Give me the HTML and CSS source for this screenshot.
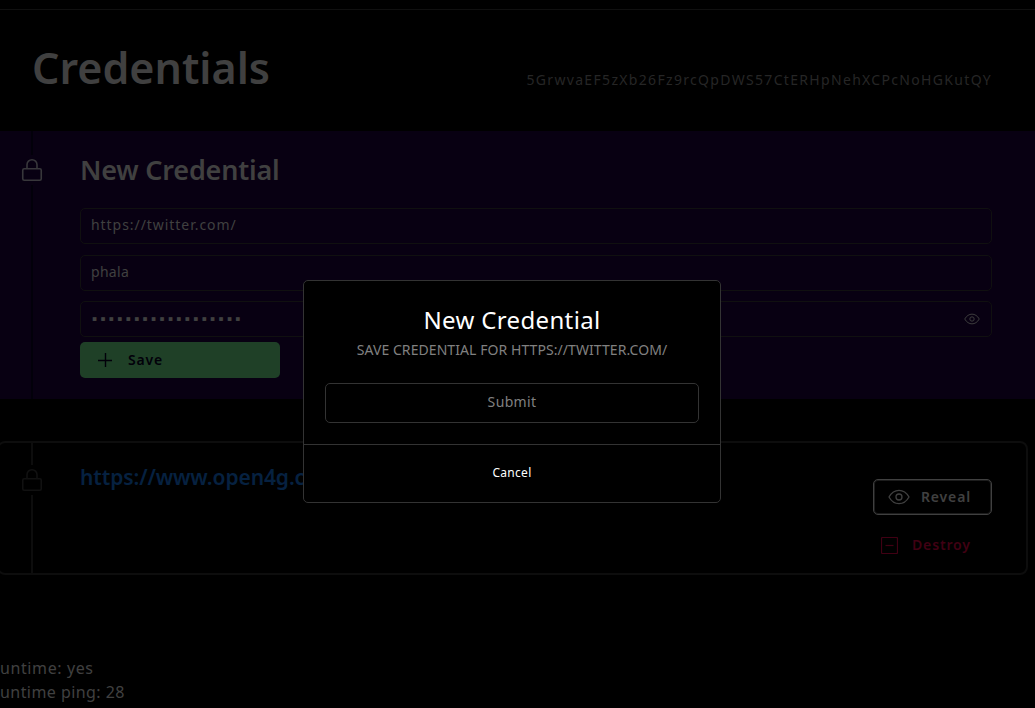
FILE: index.html
```
<!DOCTYPE html>
<html lang="en">
<head>
<meta charset="utf-8">
<title>Credentials</title>
<link rel="stylesheet" href="styles.css">
</head>
<body>
<header class="header">
  <h1 class="title"><span>Credentials</span></h1>
  <div class="address"><span>5GrwvaEF5zXb26Fz9rcQpDWS57CtERHpNehXCPcNoHGKutQY</span></div>
</header>
<section class="create">
  <div class="rail">
    <i class="rail-top"></i>
    <svg class="lock" viewBox="0 0 30 30"><rect x="5.75" y="13.75" width="18.5" height="11.5" rx="1.5"/><path d="M10 13.5V9.7a5 5 0 0 1 10 0v3.8"/></svg>
    <i class="rail-bottom"></i>
  </div>
  <form class="form">
    <h2 class="form-title"><span>New Credential</span></h2>
    <div class="field"><span class="url">https://twitter.com/</span></div>
    <div class="field"><span class="user">phala</span></div>
    <div class="field"><span class="dots">▪▪▪▪▪▪▪▪▪▪▪▪▪▪▪▪▪▪</span>
      <svg class="eye-small" viewBox="0 0 22 16"><path d="M1 8C6-.9 16-.9 21 8 16 16.9 6 16.9 1 8Z"/><circle cx="11" cy="8" r="3"/></svg>
    </div>
    <button class="save" type="button">
      <svg class="plus" viewBox="0 0 14 14"><path d="M7.5 0v14M0 7.5h14"/></svg>
      <span>Save</span>
    </button>
  </form>
</section>
<section class="card">
  <div class="rail">
    <i class="rail-top"></i>
    <svg class="lock" viewBox="0 0 30 30"><rect x="5.75" y="13.75" width="18.5" height="11.5" rx="1.5"/><path d="M10 13.5V9.7a5 5 0 0 1 10 0v3.8"/></svg>
    <i class="rail-bottom"></i>
  </div>
  <h3 class="link"><span>https://www.open4g.com</span></h3>
  <div class="actions">
    <button class="reveal" type="button">
      <svg class="eye" viewBox="0 0 22 16"><path d="M1 8C6-.9 16-.9 21 8 16 16.9 6 16.9 1 8Z"/><circle cx="11" cy="8" r="3"/></svg>
      <span>Reveal</span>
    </button>
    <button class="destroy" type="button">
      <svg class="minus" viewBox="0 0 17 17"><rect x=".5" y=".5" width="16" height="16" rx="1"/><path d="M4.5 8.5h8"/></svg>
      <span>Destroy</span>
    </button>
  </div>
</section>
<footer class="status">
  <div><span class="runtime">untime: yes</span></div>
  <div><span class="ping">untime ping: 28</span></div>
</footer>
<div class="modal">
  <div class="modal-body">
    <h4 class="modal-title"><span>New Credential</span></h4>
    <p class="modal-sub"><span>SAVE CREDENTIAL FOR HTTPS://TWITTER.COM/</span></p>
    <button class="submit" type="button"><span>Submit</span></button>
  </div>
  <button class="cancel" type="button"><span>Cancel</span></button>
</div>
</body>
</html>
```
FILE: styles.css
```
* { box-sizing: border-box; }
body {
  margin: 0;
  padding-top: 9px;
  height: 708px;
  overflow: hidden;
  background: #000;
  color: #404040;
  font-family: "Noto Sans", "Open Sans", sans-serif;
}
h1, h2, h3, h4, p { margin: 0; white-space: nowrap; }
button { font: inherit; margin: 0; padding: 0; border: 0; background: none; color: inherit; }
svg { display: block; fill: none; stroke: currentColor; flex: none; }
.header {
  height: 122px;
  border-top: 1px solid #101010;
  padding: 0 43px 0 32px;
  display: flex;
  justify-content: space-between;
}
.title { font-size: 43px; line-height: 60px; font-weight: 600; padding-top: 28px; }
.address { font-size: 14px; line-height: 20px; padding-top: 60px; color: #262626; letter-spacing: 1.32px; }
.create { height: 268px; background: #080012; display: flex; }
.rail { width: 64px; flex: none; display: flex; flex-direction: column; align-items: center; color: #111; }
.rail i { width: 2px; background: #0d0d0d; }
.rail-top { height: 24px; }
.rail-bottom { flex: 1; }
.lock { width: 30px; height: 30px; stroke-width: 1.6; }
.create .rail { color: #38373b; }
.create .rail i { background: #02000a; }
.form { margin: 0 0 0 16px; width: 912px; }
.form-title { font-size: 27px; line-height: 40px; font-weight: 600; padding: 19px 0 18px; height: 77px; letter-spacing: -.2px; }
.field {
  height: 36px;
  margin-bottom: 10.5px;
  border: 1px solid #101010;
  border-radius: 5px;
  padding: 0 11px 2px 10px;
  display: flex;
  align-items: center;
  justify-content: space-between;
  font-size: 14px;
}
.url { letter-spacing: .95px; padding-bottom: 1px; }
.user { letter-spacing: .3px; }
.dots { font: 7.5px/12px "DejaVu Sans", sans-serif; letter-spacing: 3.35px; padding: 1px 0 0 1px; }
.eye-small { width: 16px; height: 12px; stroke-width: 1.3; margin-top: 2px; }
.save {
  width: 200px;
  height: 36px;
  margin-top: -6px;
  border-radius: 5px;
  background: #1f4027;
  color: #02000a;
  display: flex;
  align-items: center;
  gap: 16px;
  padding-left: 18px;
  font-size: 14px;
  font-weight: 600;
  letter-spacing: .8px;
}
.plus { width: 14px; height: 14px; stroke-width: 1.4; }
.card {
  height: 134px;
  width: 1031px;
  margin: 42px 0 0 -3px;
  border: 2px solid #0d0d0d;
  border-radius: 8px;
  display: flex;
  padding-left: 1px;
}
.card .rail-top { height: 22px; }
.link { font-size: 21px; line-height: 30px; font-weight: 600; color: #062140; padding: 19px 0 0 16px; flex: 1; letter-spacing: -.1px; }
.actions { width: 119px; margin: 36px 34px 0 0; font-size: 14px; font-weight: 600; letter-spacing: .85px; }
.reveal, .destroy { display: flex; align-items: center; height: 36px; width: 119px; letter-spacing: inherit; }
.reveal span, .destroy span { padding-bottom: 2px; }
.reveal { border: 1px solid #404040; box-shadow: inset 0 0 0 1px #1c1c1c; border-radius: 5px; padding-left: 14px; gap: 11px; }
.eye { width: 22px; height: 16px; stroke-width: 1.3; }
.destroy { margin-top: 12px; padding-left: 8px; gap: 14px; color: #400013; }
.minus { width: 17px; height: 17px; stroke-width: 1.2; }
.status { padding-top: 81px; font-size: 16px; line-height: 24px; }
.runtime { letter-spacing: .6px; }
.ping { letter-spacing: .44px; }
.modal {
  position: absolute;
  left: 303px;
  top: 280px;
  width: 418px;
  height: 223px;
  border: 1px solid #333;
  border-radius: 5px;
  background: #000;
  text-align: center;
}
.modal-body { height: 164px; padding: 22px 21px 0; border-bottom: 1px solid #333; }
.modal-title { font-size: 24px; line-height: 34px; font-weight: 400; color: #fff; letter-spacing: .35px; }
.modal-sub { font-size: 14px; line-height: 20px; color: #808080; padding-top: 3px; letter-spacing: .07px; }
.submit { width: 374px; height: 40px; margin-top: 23px; border: 1px solid #333; border-radius: 5px; color: #808080; font-size: 14px; display: block; padding-bottom: 4px; letter-spacing: .35px; }
.cancel { width: 100%; height: 54px; color: #fff; font-size: 12px; display: block; letter-spacing: .3px; }
```
